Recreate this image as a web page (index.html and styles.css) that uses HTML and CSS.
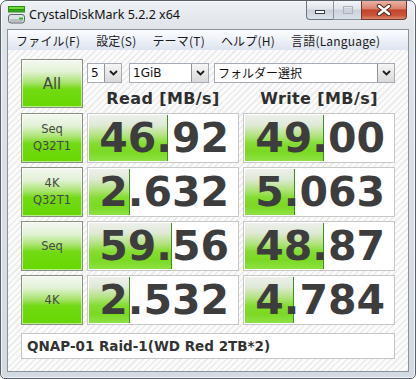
FILE: index.html
```html
<!DOCTYPE html>
<html lang="ja">
<head>
    <meta charset="UTF-8">
    <title>CrystalDiskMark 5.2.2 x64</title>
    <link rel="stylesheet" href="styles.css">
</head>
<body>

<div class="window">
    <header class="titlebar">
        <svg class="app-icon" width="17" height="18" viewBox="0 0 17 18">
            <rect x="0.5" y="0.5" width="16" height="3" fill="#6cdc34" stroke="#2e8c17"/>
            <rect x="0.5" y="3.5" width="16" height="2.5" fill="#34a81c" stroke="#2e8c17"/>
            <rect x="0.5" y="8.5" width="16" height="8.5" rx="2.5" fill="#dde1e5" stroke="#5d656d"/>
            <rect x="1.5" y="13" width="14" height="3" rx="1.5" fill="#b7bec5"/>
            <rect x="11" y="11.5" width="4" height="2" fill="#2fbf1a"/>
        </svg>
        <span class="title">CrystalDiskMark 5.2.2 x64</span>
        <div class="controls">
            <span class="ctl ctl-min">
                <svg width="12" height="6" viewBox="0 0 12 6"><rect x="1.5" y="1.5" width="9" height="3" fill="#fff" stroke="#3b3f44"/></svg>
            </span>
            <span class="ctl ctl-max">
                <svg width="12" height="10" viewBox="0 0 12 10"><rect x="1.5" y="1.5" width="9" height="7" fill="none" stroke="#aab1ba" stroke-width="1"/><rect x="3" y="3.5" width="6" height="3.5" fill="none" stroke="#c8cdd3"/></svg>
            </span>
            <span class="ctl ctl-close">
                <svg width="16" height="12" viewBox="0 0 16 12">
                    <path d="M3 2 L13 10 M13 2 L3 10" stroke="#4a2a22" stroke-width="4.4" stroke-linecap="round"/>
                    <path d="M3 2 L13 10 M13 2 L3 10" stroke="#fff" stroke-width="2.4" stroke-linecap="round"/>
                </svg>
            </span>
        </div>
    </header>

    <div class="client">
        <nav class="menubar">
            <span>ファイル(F)</span>
            <span>設定(S)</span>
            <span>テーマ(T)</span>
            <span>ヘルプ(H)</span>
            <span>言語(Language)</span>
        </nav>

        <main class="panel">
            <div class="tile tile-all">All</div>
            <div class="top">
                <div class="combos">
                    <div class="combo combo-count">
                        <span class="combo-text">5</span>
                        <span class="combo-btn"><svg width="9" height="6" viewBox="0 0 9 6"><path d="M1 1 L4.5 4.5 L8 1" fill="none" stroke="#1c1c1c" stroke-width="1.8"/></svg></span>
                    </div>
                    <div class="combo combo-size">
                        <span class="combo-text">1GiB</span>
                        <span class="combo-btn"><svg width="9" height="6" viewBox="0 0 9 6"><path d="M1 1 L4.5 4.5 L8 1" fill="none" stroke="#1c1c1c" stroke-width="1.8"/></svg></span>
                    </div>
                    <div class="combo combo-folder">
                        <span class="combo-text">フォルダー選択</span>
                        <span class="combo-btn"><svg width="9" height="6" viewBox="0 0 9 6"><path d="M1 1 L4.5 4.5 L8 1" fill="none" stroke="#1c1c1c" stroke-width="1.8"/></svg></span>
                    </div>
                </div>
                <div class="heads">
                    <div>Read [MB/s]</div>
                    <div>Write [MB/s]</div>
                </div>
            </div>

            <!-- Seq Q32T1 -->
            <div class="tile">Seq<br>Q32T1</div>
            <div class="result"><div class="bar" style="width:79px"></div><div class="value">46.92</div></div>
            <div class="result"><div class="bar" style="width:79px"></div><div class="value">49.00</div></div>

            <!-- 4K Q32T1 -->
            <div class="tile">4K<br>Q32T1</div>
            <div class="result"><div class="bar" style="width:41px"></div><div class="value">2.632</div></div>
            <div class="result"><div class="bar" style="width:50px"></div><div class="value">5.063</div></div>

            <!-- Seq -->
            <div class="tile">Seq</div>
            <div class="result"><div class="bar" style="width:83px"></div><div class="value">59.56</div></div>
            <div class="result"><div class="bar" style="width:79px"></div><div class="value">48.87</div></div>

            <!-- 4K -->
            <div class="tile">4K</div>
            <div class="result"><div class="bar" style="width:41px"></div><div class="value">2.532</div></div>
            <div class="result"><div class="bar" style="width:49px"></div><div class="value">4.784</div></div>

            <div class="comment">QNAP-01 Raid-1(WD Red 2TB*2)</div>
        </main>
    </div>
</div>

</body>
</html>
```

FILE: styles.css
```css
body {
    margin: 0;
    font-family: 'DejaVu Sans', Verdana, sans-serif;
    background-color: #fff;
}

.window {
    box-sizing: border-box;
    width: 416px;
    height: 379px;
    border: 1px solid #59606a;
    border-radius: 7px 7px 5px 5px;
    padding: 0 6px 6px;
    background: linear-gradient(to bottom, #eef1f5 0, #dfe4ea 28px, #d4dae1 100%);
    box-shadow: inset 0 0 0 1px rgba(255, 255, 255, 0.7);
    display: flex;
    flex-direction: column;
}

/* title bar */
.titlebar {
    height: 28px;
    display: flex;
    align-items: center;
    padding-left: 1px;
}

.app-icon {
    margin-bottom: 1px;
}

.title {
    margin-left: 4px;
    margin-bottom: 2px;
    font-family: 'Noto Sans', sans-serif;
    font-size: 12.5px;
    color: #111;
}

.controls {
    margin-left: auto;
    margin-right: 2px;
    align-self: flex-start;
    display: flex;
    height: 19px;
}

.ctl {
    box-sizing: border-box;
    height: 19px;
    display: flex;
    align-items: center;
    justify-content: center;
    border: 1px solid #6e7680;
    border-top: none;
    background: linear-gradient(to bottom, #f4f6f9 0%, #dfe4ea 45%, #c9d0d9 50%, #dbe1e8 100%);
}

.ctl-min {
    width: 27px;
    border-right: none;
    border-bottom-left-radius: 4px;
    padding-top: 4px;
}

.ctl-max {
    width: 28px;
    border-right: none;
    border-color: #8c939c;
}

.ctl-close {
    width: 46px;
    border-color: #6b3a30;
    border-bottom-right-radius: 4px;
    background: linear-gradient(to bottom, #eab2a4 0%, #d9846e 42%, #c2442a 50%, #c9553a 80%, #de8a6c 100%);
}

/* client area */
.client {
    flex: 1;
    display: flex;
    flex-direction: column;
    border: 1px solid #8a929c;
    background-color: #fff;
}

.menubar {
    height: 20px;
    display: flex;
    align-items: center;
    gap: 16px;
    padding-left: 8px;
    font-family: 'Noto Sans CJK JP', sans-serif;
    font-size: 12px;
    letter-spacing: 0.2px;
    color: #1a1a1a;
    background: linear-gradient(to bottom, #fbfcfe 0%, #edf1f8 50%, #dde4f0 100%);
}

.panel {
    flex: 1;
    padding: 9px 13px 0;
    display: grid;
    grid-template-columns: 62px 152px 152px;
    grid-template-rows: 50px repeat(4, 50px) 30px;
    gap: 4px;
    background: repeating-linear-gradient(135deg, #fbfbfb 0, #fbfbfb 3px, #ececec 3px, #ececec 4.5px);
}

/* test buttons */
.tile {
    box-sizing: border-box;
    display: flex;
    align-items: center;
    justify-content: center;
    text-align: center;
    border: 1px solid #87907f;
    font-size: 11.5px;
    line-height: 17px;
    color: #474747;
    background: linear-gradient(to bottom, #f4f8f1 0%, #e2f2d6 25%, #a9e46e 48%, #72da12 62%, #66d800 100%);
    box-shadow: inset 0 0 0 1px rgba(255, 255, 255, 0.55);
}

.tile-all {
    height: 49px;
    font-size: 15px;
    padding-top: 2px;
}

.top {
    grid-column: 2 / 4;
    display: flex;
    flex-direction: column;
}

.combos {
    margin-top: 4px;
    display: flex;
    height: 20px;
}

.combo {
    box-sizing: border-box;
    display: flex;
    align-items: stretch;
    border: 1px solid #a4abb4;
    background-color: #fff;
    font-family: 'DejaVu Sans', 'Noto Sans CJK JP', sans-serif;
    font-size: 12px;
    color: #111;
}

.combo-count {
    width: 35px;
}

.combo-size {
    width: 80px;
    margin-left: 7px;
}

.combo-folder {
    width: 181px;
    margin-left: 5px;
    font-family: 'Noto Sans CJK JP', sans-serif;
}

.combo-text {
    padding-left: 3px;
    line-height: 18px;
}

.combo-btn {
    margin-left: auto;
    width: 16px;
    display: flex;
    align-items: center;
    justify-content: center;
    border-left: 1px solid #8f969e;
    background: linear-gradient(to bottom, #f6f6f6, #d9d9d9);
}

.heads {
    margin-top: auto;
    display: flex;
    gap: 4px;
    line-height: 20px;
}

.heads div {
    width: 152px;
    text-align: center;
    font-weight: bold;
    font-size: 16px;
    letter-spacing: 0.4px;
    color: #2e2e2e;
}

/* result boxes */
.result {
    box-sizing: border-box;
    display: grid;
    padding: 1px;
    border: 1px solid #c6c8c6;
    background-color: #fff;
}

.bar {
    grid-area: 1 / 1;
    box-sizing: border-box;
    border-right: 1px solid #3d8f1b;
    background: linear-gradient(to bottom, #eef0ec 0%, #dfe9d6 22%, #b2e37e 45%, #84dd30 62%, #7ad922 80%, #8ee244 100%);
}

.value {
    grid-area: 1 / 1;
    justify-self: end;
    align-self: center;
    padding-right: 8px;
    font-weight: bold;
    font-size: 41px;
    line-height: 1;
    color: #3d3d3d;
}

.comment {
    grid-column: 1 / 4;
    margin-top: 4px;
    box-sizing: border-box;
    display: flex;
    align-items: center;
    padding-left: 5px;
    border: 1px solid #c4c6c8;
    background-color: #fff;
    font-weight: bold;
    font-size: 13.5px;
    color: #333;
}
```
